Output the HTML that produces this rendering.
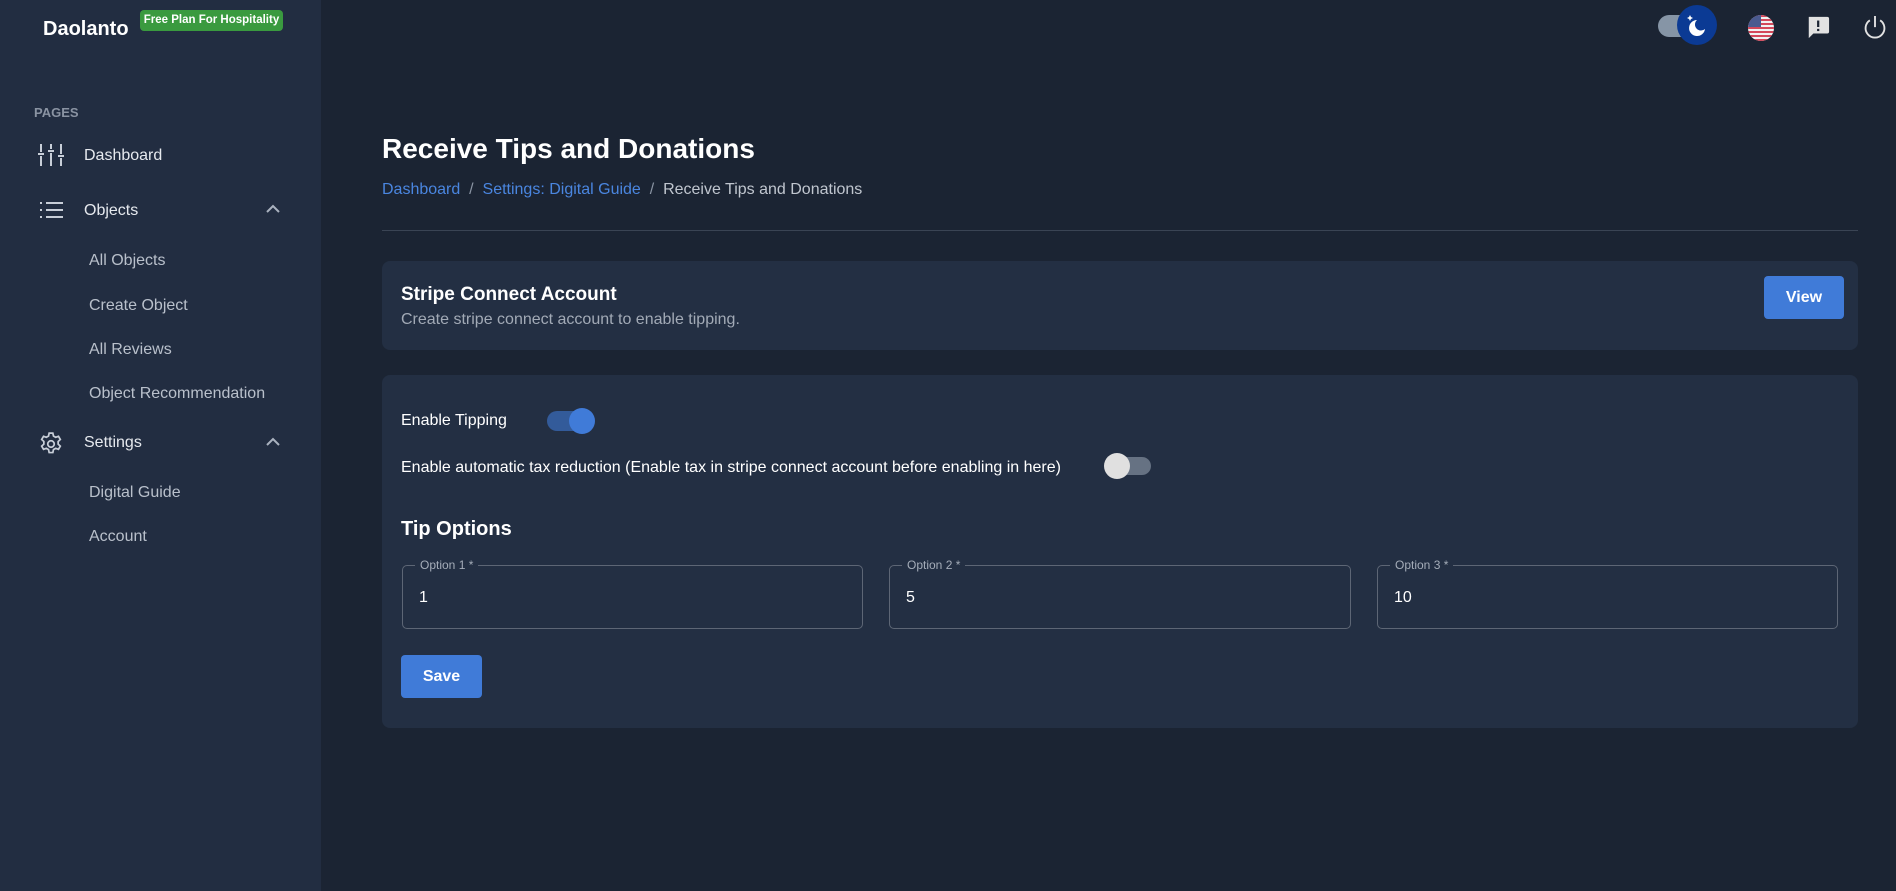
<!DOCTYPE html>
<html><head><meta charset="utf-8"><style>
*{box-sizing:border-box;margin:0;padding:0}
body{width:1896px;height:891px;background:#1b2433;font-family:"Liberation Sans",sans-serif;position:relative;overflow:hidden;color:#fff}
.a{position:absolute;white-space:nowrap}
svg.a{display:block}
.sb{position:absolute;left:0;top:0;width:321px;height:891px;background:#222d41}
.nav{font-size:16px;color:#e6e9ee}
.sub{font-size:16px;color:#b9c0cb}
.card{position:absolute;left:382px;width:1476px;background:#232f43;border-radius:8px}
.inp{position:absolute;top:565px;height:64px;border:1px solid #5d6675;border-radius:5px}
.inp span{position:absolute;left:12px;top:-8px;background:#232f43;padding:0 5px;font-size:12px;color:#a5adb9}
.inp b{position:absolute;left:16px;top:23px;font-weight:normal;font-size:16px;color:#fff}
</style></head><body>
<div class="sb"></div>
<div class="a" style="left:43px;top:18px;font-size:20px;font-weight:bold">Daolanto</div>
<div class="a" style="left:140px;top:10px;width:143px;height:21px;background:#3a9a3f;border-radius:4px;font-size:11.5px;font-weight:bold;text-align:center;line-height:20px">Free Plan For Hospitality</div>
<div class="a" style="left:34px;top:105px;font-size:13px;color:#8a93a2;font-weight:bold">PAGES</div>
<svg class="a" style="left:38px;top:144px" width="26" height="22" viewBox="0 0 26 22" stroke="#c8ced8" stroke-width="2" fill="none"><path d="M3 0v8M0 10h6M3 12v10M13 0v5M10 7h6M13 9v13M23 0v10M20 12h6M23 14v8"/></svg>
<div class="a nav" style="left:84px;top:147px">Dashboard</div>
<svg class="a" style="left:40px;top:202px" width="23" height="17" viewBox="0 0 23 17" stroke="#c8ced8" stroke-width="2" fill="none"><path d="M0 1h2M6 1h17M0 8h2M6 8h17M0 15h2M6 15h17"/></svg>
<div class="a nav" style="left:84px;top:202px">Objects</div>
<svg class="a" style="left:266px;top:204px" width="14" height="9" viewBox="0 0 14 9" stroke="#aab2bf" stroke-width="2" fill="none"><path d="M1 8l6-6 6 6"/></svg>
<div class="a sub" style="left:89px;top:252px">All Objects</div>
<div class="a sub" style="left:89px;top:297px">Create Object</div>
<div class="a sub" style="left:89px;top:341px">All Reviews</div>
<div class="a sub" style="left:89px;top:385px">Object Recommendation</div>
<svg class="a" style="left:38px;top:431px" width="26" height="26" viewBox="0 0 24 24" stroke="#c8ced8" stroke-width="1.6" fill="none"><circle cx="12" cy="12" r="3"/><path d="M10.3 2h3.4l.6 2.7 2 1.1 2.6-.9 1.7 2.9-2 1.9v2.4l2 1.9-1.7 2.9-2.6-.9-2 1.1-.6 2.8h-3.4l-.6-2.8-2-1.1-2.6.9-1.7-2.9 2-1.9V9.7l-2-1.9 1.7-2.9 2.6.9 2-1.1z"/></svg>
<div class="a nav" style="left:84px;top:434px">Settings</div>
<svg class="a" style="left:266px;top:437px" width="14" height="9" viewBox="0 0 14 9" stroke="#aab2bf" stroke-width="2" fill="none"><path d="M1 8l6-6 6 6"/></svg>
<div class="a sub" style="left:89px;top:484px">Digital Guide</div>
<div class="a sub" style="left:89px;top:528px">Account</div>

<div class="a" style="left:1658px;top:15px;width:36px;height:22px;background:#8695a6;border-radius:11px"></div>
<div class="a" style="left:1677px;top:5px;width:40px;height:40px;background:#0b3a94;border-radius:50%"></div>
<svg class="a" style="left:1684px;top:12px" width="26" height="26" viewBox="0 0 26 26"><path d="M13 8a8 8 0 1 0 8 9 6 6 0 0 1-8-9z" fill="#fff"/><path d="M6 3l1 2 2 1-2 1-1 2-1-2-2-1 2-1z" fill="#fff"/></svg>
<svg class="a" style="left:1748px;top:15px" width="26" height="26" viewBox="0 0 26 26"><defs><clipPath id="c"><circle cx="13" cy="13" r="13"/></clipPath></defs><g clip-path="url(#c)"><rect width="26" height="26" fill="#f2f2f2"/><g fill="#d4485a"><rect y="0" width="26" height="2"/><rect y="4" width="26" height="2"/><rect y="8" width="26" height="2"/><rect y="12" width="26" height="2"/><rect y="16" width="26" height="2"/><rect y="20" width="26" height="2"/><rect y="24" width="26" height="2"/></g><rect width="13" height="12" fill="#4a5a8f"/></g></svg>
<svg class="a" style="left:1806px;top:15px" width="24" height="24" viewBox="0 0 26 26"><path d="M3 2h20a2 2 0 0 1 2 2v14a2 2 0 0 1-2 2H8l-5 5z" fill="#e2e2e2"/><rect x="12" y="6" width="2.4" height="7" fill="#1b2433"/><rect x="12" y="15" width="2.4" height="2.4" fill="#1b2433"/></svg>
<svg class="a" style="left:1863px;top:15px" width="24" height="26" viewBox="0 0 28 30" stroke="#e2e2e2" stroke-width="2.2" fill="none"><path d="M14 1v13"/><path d="M8 6a11 11 0 1 0 12 0"/></svg>

<div class="a" style="left:382px;top:133px;font-size:28px;font-weight:bold">Receive Tips and Donations</div>
<div class="a" style="left:382px;top:181px;font-size:16px;color:#8a94a3"><span style="color:#4a86e0">Dashboard</span>&nbsp; / &nbsp;<span style="color:#4a86e0">Settings: Digital Guide</span>&nbsp; / &nbsp;<span style="color:#c0c6cf">Receive Tips and Donations</span></div>
<div class="a" style="left:382px;top:230px;width:1476px;height:1px;background:#3a4454"></div>

<div class="card" style="top:261px;height:89px"></div>
<div class="a" style="left:401px;top:284px;font-size:19px;font-weight:bold">Stripe Connect Account</div>
<div class="a" style="left:401px;top:311px;font-size:16px;color:#a2aab6">Create stripe connect account to enable tipping.</div>
<div class="a" style="left:1764px;top:276px;width:80px;height:43px;background:#407bd8;border-radius:4px;font-size:16px;font-weight:bold;text-align:center;line-height:43px">View</div>

<div class="card" style="top:375px;height:353px"></div>
<div class="a" style="left:401px;top:412px;font-size:16px">Enable Tipping</div>
<div class="a" style="left:547px;top:411px;width:40px;height:20px;background:#335b9a;border-radius:10px"></div>
<div class="a" style="left:569px;top:408px;width:26px;height:26px;background:#407bd8;border-radius:50%"></div>
<div class="a" style="left:401px;top:459px;font-size:16px">Enable automatic tax reduction (Enable tax in stripe connect account before enabling in here)</div>
<div class="a" style="left:1112px;top:457px;width:39px;height:18px;background:#667283;border-radius:9px"></div>
<div class="a" style="left:1104px;top:453px;width:26px;height:26px;background:#e0e0e0;border-radius:50%"></div>
<div class="a" style="left:401px;top:518px;font-size:20px;font-weight:bold">Tip Options</div>
<div class="inp" style="left:402px;width:461px"><span>Option 1 *</span><b>1</b></div>
<div class="inp" style="left:889px;width:462px"><span>Option 2 *</span><b>5</b></div>
<div class="inp" style="left:1377px;width:461px"><span>Option 3 *</span><b>10</b></div>
<div class="a" style="left:401px;top:655px;width:81px;height:43px;background:#407bd8;border-radius:4px;font-size:16px;font-weight:bold;text-align:center;line-height:43px">Save</div>
</body></html>
